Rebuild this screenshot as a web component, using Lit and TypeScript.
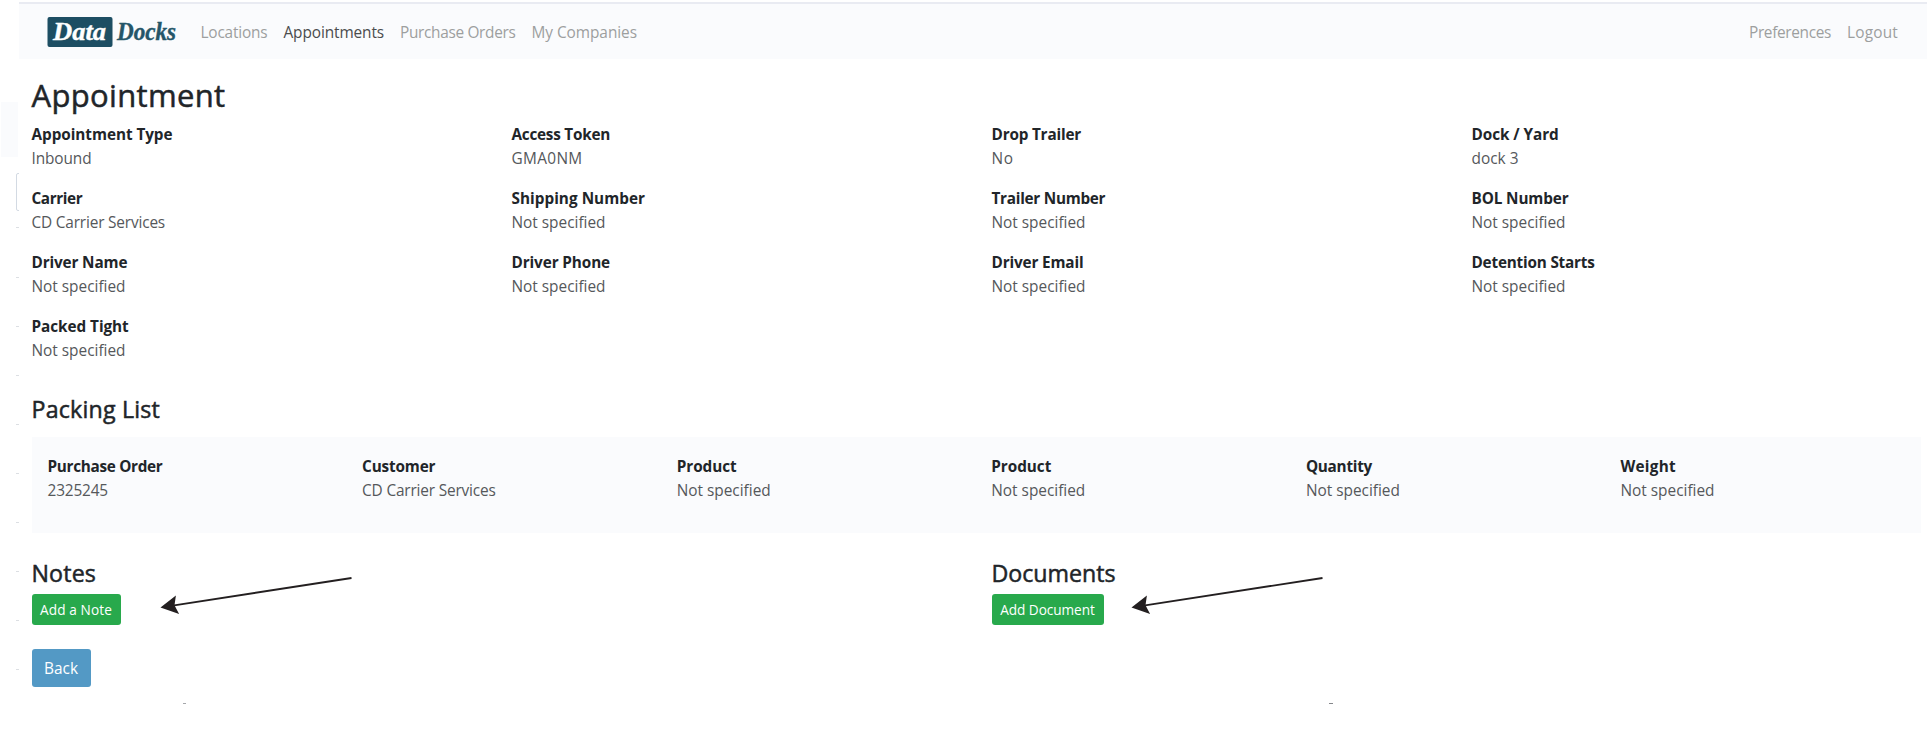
import { LitElement, html, css, svg } from "lit";
import { customElement } from "lit/decorators.js";
import { styleMap } from "lit/directives/style-map.js";

const FAMILY = '"Open Sans", "Noto Sans", sans-serif';
const pen = document.createElement("canvas").getContext("2d")!;

// Text set to a given measure: the tracking is spread evenly over the glyphs.
function tracked(text: string, width: number, size: number, weight = 400) {
  pen.font = `${weight} ${size}px ${FAMILY}`;
  const spacing = (width - pen.measureText(text).width) / text.length;
  return html`<span style=${styleMap({ letterSpacing: `${spacing.toFixed(3)}px` })}>${text}</span>`;
}

type Entry = [label: string, labelWidth: number, value: string, valueWidth: number];

const NONE = "Not specified";

const DETAILS: Entry[] = [
  ["Appointment Type", 141, "Inbound", 60],
  ["Access Token", 98.5, "GMA0NM", 71],
  ["Drop Trailer", 89.5, "No", 22],
  ["Dock / Yard", 87.2, "dock 3", 47],
  ["Carrier", 50.8, "CD Carrier Services", 133.5],
  ["Shipping Number", 133.5, NONE, 94],
  ["Trailer Number", 113.8, NONE, 94],
  ["BOL Number", 97, NONE, 94],
  ["Driver Name", 95.8, NONE, 94],
  ["Driver Phone", 98.5, NONE, 94],
  ["Driver Email", 92, NONE, 94],
  ["Detention Starts", 123.2, NONE, 94],
  ["Packed Tight", 97.2, NONE, 94],
];

const PACKING: Entry[] = [
  ["Purchase Order", 115, "2325245", 60.5],
  ["Customer", 73.2, "CD Carrier Services", 133.5],
  ["Product", 60, NONE, 94],
  ["Product", 60, NONE, 94],
  ["Quantity", 66.2, NONE, 94],
  ["Weight", 55.5, NONE, 94],
];

const MARKS = [227, 277, 326, 375, 424, 473, 522, 571, 620, 669];

@customElement("nav-bar")
class NavBar extends LitElement {
  static styles = css`
    :host {
      display: flex;
      align-items: center;
      box-sizing: border-box;
      height: 57px;
      padding: 0 29px 0 28px;
      border-top: 2px solid #e9ebf2;
      background: #fafbfd;
      font: 15.4px/24px "Open Sans", "Noto Sans", sans-serif;
      color: #9d9f9f;
    }
    .brand {
      display: block;
      margin-right: 15.5px;
      overflow: visible;
    }
    .group {
      display: flex;
      gap: 16px;
      padding-top: 2px;
    }
    .group.end {
      margin-left: auto;
    }
    .active {
      color: #4b4c4d;
    }
    .script {
      font-family: "Liberation Serif", serif;
      font-weight: bold;
      font-style: italic;
    }
  `;
  render() {
    return html`
      <svg class="brand" width="138" height="36" viewBox="0 -2 138 36">
        <rect x="0.500" y="1" width="65" height="30" rx="2" fill="#1d4e63" />
        <text class="script" x="6" y="24" font-size="25" fill="#fff" stroke="#fff" stroke-width=".4" textLength="53" lengthAdjust="spacingAndGlyphs">Data</text>
        <text class="script" x="70" y="24" font-size="25" fill="#255669" stroke="#255669" stroke-width=".4" textLength="59" lengthAdjust="spacingAndGlyphs">Docks</text>
      </svg>
      <div class="group">
        <span>${tracked("Locations", 67, 15.4)}</span>
        <span class="active">${tracked("Appointments", 100.5, 15.4)}</span>
        <span>${tracked("Purchase Orders", 115.5, 15.4)}</span>
        <span>${tracked("My Companies", 105.5, 15.4)}</span>
      </div>
      <div class="group end">
        <span>${tracked("Preferences", 82, 15.4)}</span>
        <span>${tracked("Logout", 51, 15.4)}</span>
      </div>
    `;
  }
}

@customElement("app-root")
class AppRoot extends LitElement {
  static styles = css`
    :host {
      display: block;
      position: relative;
      box-sizing: border-box;
      height: 746px;
      padding: 2px 0 0 19px;
      overflow: hidden;
      background: #fff;
      color: #212529;
      font: 15.4px/24px "Open Sans", "Noto Sans", sans-serif;
      white-space: nowrap;
    }
    main {
      padding: 17px 6px 0 12.5px;
    }
    h1,
    h2 {
      margin: 0;
      font-weight: 400;
      -webkit-text-stroke: 0.5px #212529;
    }
    h1 {
      font-size: 31px;
      line-height: 38px;
      margin-bottom: 8px;
    }
    h2 {
      font-size: 23.2px;
      line-height: 29px;
    }
    .details {
      display: grid;
      grid-template-columns: repeat(4, 480px);
      row-gap: 16px;
      margin-bottom: 33px;
    }
    .label {
      font-weight: 700;
      font-size: 15.3px;
      height: 24px;
      color: #212529;
    }
    .value {
      box-sizing: border-box;
      height: 24px;
      padding-top: 1px;
      color: #55585b;
    }
    .packing {
      display: grid;
      grid-template-columns: repeat(6, 314.6px);
      box-sizing: border-box;
      height: 96px;
      margin: 13px 0 26px;
      padding: 17px 0 0 16px;
      background: #fafbfd;
      overflow: hidden;
    }
    .columns {
      display: grid;
      grid-template-columns: 960px 1fr;
    }
    .btn {
      display: inline-flex;
      align-items: center;
      justify-content: center;
      box-sizing: border-box;
      height: 31px;
      border: 0;
      border-radius: 3px;
      padding: 0;
      margin-top: 6px;
      background: #28a94c;
      color: #fff;
      font: 13.6px/20px "Open Sans", "Noto Sans", sans-serif;
    }
    .note {
      width: 89px;
    }
    .document {
      width: 112px;
    }
    .back {
      width: 59px;
      height: 38px;
      margin-top: 24px;
      padding-top: 2px;
      background: #5399c5;
      font-size: 15.4px;
    }
    .columns > div {
      display: flex;
      flex-direction: column;
      align-items: flex-start;
    }
    .overlay {
      position: absolute;
      inset: 0;
      pointer-events: none;
    }
  `;

  entry([label, lw, value, vw]: Entry) {
    return html`<div>
      <div class="label">${tracked(label, lw, 15.3, 700)}</div>
      <div class="value">${tracked(value, vw, 15.4)}</div>
    </div>`;
  }

  arrow(x: number) {
    return svg`<g transform="translate(${x} 0)">
      <path d="M12 605.6 L191 578" stroke="#231f20" stroke-width="1.9" fill="none" />
      <path d="M0 607.6 L15.4 595.4 L14 605.3 L18.6 614 Z" fill="#231f20" />
    </g>`;
  }

  render() {
    return html`
      <nav-bar></nav-bar>
      <main>
        <h1>${tracked("Appointment", 194, 31)}</h1>
        <section class="details">${DETAILS.map((e) => this.entry(e))}</section>
        <h2>${tracked("Packing List", 128.5, 23.2)}</h2>
        <section class="packing">${PACKING.map((e) => this.entry(e))}</section>
        <section class="columns">
          <div>
            <h2>${tracked("Notes", 64.5, 23.2)}</h2>
            <button class="btn note">${tracked("Add a Note", 72, 13.6)}</button>
          </div>
          <div>
            <h2>${tracked("Documents", 124, 23.2)}</h2>
            <button class="btn document">${tracked("Add Document", 94.5, 13.6)}</button>
          </div>
        </section>
        <button class="btn back">${tracked("Back", 34, 15.4)}</button>
      </main>
      <svg class="overlay" width="1927" height="746">
        <rect x="1" y="102" width="17" height="55" fill="#fafbfd" />
        <path d="M19 173.5 h-1 q-1.500 0 -1.500 1.500 v34 q0 1.500 1.500 1.500 h1" fill="none" stroke="#d3dae3" />
        ${MARKS.map((y) => svg`<rect x="16" y=${y} width="3" height="1" fill="#dcdfe3" />`)}
        <rect x="183" y="703" width="3" height="1" fill="#a5a7ab" />
        <rect x="1329" y="703" width="4" height="1" fill="#85878b" />
        ${this.arrow(160.5)} ${this.arrow(1131.5)}
      </svg>
    `;
  }
}
